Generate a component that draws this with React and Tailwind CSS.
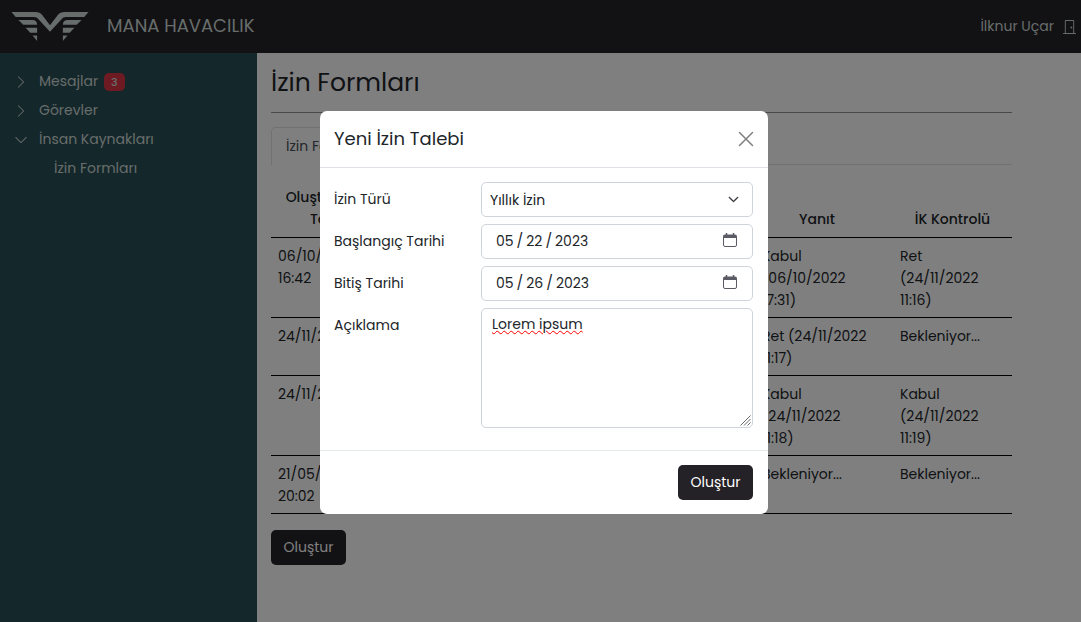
import React, { useState } from "react";
import {
  BsChevronDown,
  BsChevronRight,
  BsDoorClosed,
} from "react-icons/bs";

const menu = [
  { label: "Mesajlar", count: 3, icon: BsChevronRight },
  { label: "Görevler", icon: BsChevronRight },
  { label: "İnsan Kaynakları", icon: BsChevronDown, children: ["İzin Formları"] },
];

const rows = [
  {
    created: "06/10/2022\n16:42",
    answer: "Kabul\n(06/10/2022\n17:31)",
    hr: "Ret\n(24/11/2022\n11:16)",
  },
  {
    created: "24/11/2022",
    answer: "Ret (24/11/2022\n11:17)",
    hr: "Bekleniyor...",
  },
  {
    created: "24/11/2022",
    answer: "Kabul\n(24/11/2022\n11:18)",
    hr: "Kabul\n(24/11/2022\n11:19)",
  },
  {
    created: "21/05/2023\n20:02",
    answer: "Bekleniyor...",
    hr: "Bekleniyor...",
  },
];

const fieldClass =
  "block w-full rounded-[5px] border border-[#ced4da] bg-white text-[#212529] outline-none";

function Logo() {
  return (
    <svg viewBox="0 0 234 88" className="h-[29px] w-[78px]" fill="currentColor" aria-hidden="true">
      <path d="M0 0H72C83 0 88 3 94 10L117 40L140 10C146 3 151 0 162 0H234L221 15H166C159 15 156 17 152 22L117 60L82 22C78 17 75 15 68 15H13Z" />
      <path d="M21 24H63C73 24 78 29 78 39H36Z" />
      <path d="M43 48H78V63H57Z" />
      <path d="M64 71H78V88Z" />
      <path d="M213 24H171C161 24 156 29 156 39H198Z" />
      <path d="M191 48H156V63H177Z" />
      <path d="M170 71H156V88Z" />
    </svg>
  );
}

function Navbar() {
  return (
    <header className="flex h-[53px] items-center justify-between bg-[#242227] pr-1 pb-px pl-[11px] text-[#cfdad7]">
      <a href="#" className="flex items-center gap-[18px] text-lg">
        <Logo />
        MANA HAVACILIK
      </a>
      <div className="flex items-center gap-2">
        <span>İlknur Uçar</span>
        <button type="button" aria-label="Çıkış">
          <BsDoorClosed size={15} />
        </button>
      </div>
    </header>
  );
}

function Sidebar() {
  return (
    <nav className="w-[257px] shrink-0 bg-[#284e55] px-[14px] pt-[14px] text-[#cfdad7]">
      <ul>
        {menu.map((item) => (
          <li key={item.label}>
            <a href="#" className="flex h-[29px] items-center">
              <item.icon size={14} />
              <span className="ml-[11px]">{item.label}</span>
              {item.count && (
                <span className="ml-[6px] rounded-[5px] bg-[#dc3545] px-[7px] py-px text-[11px] leading-4 font-medium">
                  {item.count}
                </span>
              )}
            </a>
            {item.children?.map((child) => (
              <a href="#" key={child} className="flex h-[29px] items-center pl-10">
                {child}
              </a>
            ))}
          </li>
        ))}
      </ul>
    </nav>
  );
}

function LeaveTable() {
  return (
    <table className="mt-[14px] w-full table-fixed border-collapse">
      <colgroup>
        <col className="w-[117px]" />
        <col />
        <col className="w-[14px]" />
        <col className="w-[138px]" />
        <col className="w-[119px]" />
      </colgroup>
      <thead>
        <tr className="border-b border-black align-bottom leading-[22px]">
          <th className="px-[7px] py-[7px] font-medium">Oluşturulma Tarihi</th>
          <td />
          <th colSpan={2} className="px-[7px] py-[7px] font-medium">
            Yanıt
          </th>
          <th className="px-[7px] py-[7px] font-medium">İK Kontrolü</th>
        </tr>
      </thead>
      <tbody>
        {rows.map((r, i) => (
          <tr key={i} className="border-b border-black align-top leading-[22px] whitespace-pre">
            <td className="px-[7px] pt-[7px] pb-[6px]">
              {/* keeps the two line height for single line dates */}
              <div className="min-h-11">{r.created}</div>
            </td>
            <td />
            <td />
            <td className="px-[7px] pt-[7px] pb-[6px]">{r.answer}</td>
            <td className="px-[7px] pt-[7px] pb-[6px]">{r.hr}</td>
          </tr>
        ))}
      </tbody>
    </table>
  );
}

function DateField({ id, value, onChange }) {
  return (
    <div className="relative">
      <input
        id={id}
        name={id}
        type="date"
        value={value}
        onChange={onChange}
        className={`${fieldClass} h-[35px] px-[13px] pb-px [&::-webkit-calendar-picker-indicator]:opacity-0 [&::-webkit-datetime-edit-text]:px-[2px]`}
      />
      <svg
        viewBox="0 0 14 15"
        className="pointer-events-none absolute top-[9px] right-4 h-[15px] w-[14px] text-[#5b5b66]"
        fill="none"
        stroke="currentColor"
        aria-hidden="true"
      >
        <rect x="0.5" y="2" width="13" height="11.5" rx="1.5" />
        <path d="M0.5 3.5H13.5" strokeWidth="3" />
        <path d="M3.5 0V3M10.5 0V3" strokeWidth="1.5" />
      </svg>
    </div>
  );
}

function LeaveModal({ onClose }) {
  const [form, setForm] = useState({
    type: "yillik",
    start: "2023-05-22",
    end: "2023-05-26",
    note: "Lorem ipsum",
  });

  const handleChange = (e) =>
    setForm((f) => ({ ...f, [e.target.name]: e.target.value }));

  return (
    <div className="fixed inset-0 flex items-center justify-center bg-black/50 pt-[3px] pl-[7px]">
      <form
        role="dialog"
        aria-labelledby="modal-title"
        onSubmit={(e) => e.preventDefault()}
        className="w-full max-w-md rounded-[7px] bg-white"
      >
        <div className="flex h-[57px] items-center justify-between border-b border-[#dee2e6] px-[14px]">
          <h2 id="modal-title" className="text-lg">
            Yeni İzin Talebi
          </h2>
          <button type="button" aria-label="Kapat" onClick={onClose} className="text-black/50">
            <svg viewBox="0 0 16 16" className="size-4" stroke="currentColor" strokeWidth="1.5" strokeLinecap="round">
              <path d="M1.5 1.5L14.5 14.5M14.5 1.5L1.5 14.5" />
            </svg>
          </button>
        </div>

        <div className="grid grid-cols-[147px_1fr] gap-y-[7px] pt-[14px] pr-[15px] pb-[22px] pl-[14px] leading-[34px]">
          <label htmlFor="type">İzin Türü</label>
          <div className="relative">
            <select
              id="type"
              name="type"
              value={form.type}
              onChange={handleChange}
              className={`${fieldClass} h-[35px] appearance-none px-2 pb-px`}
            >
              <option value="yillik">Yıllık İzin</option>
            </select>
            <BsChevronDown
              size={11}
              strokeWidth={1}
              className="pointer-events-none absolute top-3 right-[14px]"
            />
          </div>

          <label htmlFor="start">Başlangıç Tarihi</label>
          <DateField id="start" value={form.start} onChange={handleChange} />

          <label htmlFor="end">Bitiş Tarihi</label>
          <DateField id="end" value={form.end} onChange={handleChange} />

          <label htmlFor="note">Açıklama</label>
          <div className="relative">
            <textarea
              id="note"
              name="note"
              value={form.note}
              onChange={handleChange}
              className={`${fieldClass} h-[120px] px-[10px] py-1 leading-[22px] underline decoration-[#ff0000] decoration-wavy decoration-1 underline-offset-1 [&::-webkit-resizer]:hidden`}
            />
            <svg
              viewBox="0 0 11 11"
              className="pointer-events-none absolute right-[2px] bottom-[2px] size-[11px] text-[#666]"
              stroke="currentColor"
              aria-hidden="true"
            >
              <path d="M0.5 10.5L10.5 0.5M4 10.5L10.5 4M7.5 10.5L10.5 7.5" />
            </svg>
          </div>
        </div>

        <div className="flex justify-end border-t border-[#e4eaec] py-[14px] pr-[15px]">
          <button
            type="submit"
            className="h-[35px] w-[75px] rounded-[5px] bg-[#242227] text-white"
          >
            Oluştur
          </button>
        </div>
      </form>
    </div>
  );
}

export default function App() {
  const [open, setOpen] = useState(true);

  return (
    <div className="flex min-h-screen flex-col bg-white font-[Poppins,Inter,sans-serif] text-[14px] text-[#212529]">
      <Navbar />
      <div className="flex flex-1">
        <Sidebar />
        <main className="min-w-0 flex-1 pr-[69px] pb-6 pl-[14px]">
          <h1 className="border-b border-[#909294] pt-3 pb-[11px] text-[25px] leading-9">
            İzin Formları
          </h1>
          <div className="mt-[14px] flex border-b border-[#dee2e6]">
            <button
              type="button"
              className="-mb-px h-[38px] rounded-t-[5px] border border-b-0 border-[#dee2e6] bg-white px-[14px] text-[#495057]"
            >
              İzin Formları
            </button>
          </div>
          <LeaveTable />
          <button
            type="button"
            onClick={() => setOpen(true)}
            className="mt-4 h-[35px] w-[75px] rounded-[5px] bg-[#242227] text-white"
          >
            Oluştur
          </button>
        </main>
      </div>
      {open && <LeaveModal onClose={() => setOpen(false)} />}
    </div>
  );
}
